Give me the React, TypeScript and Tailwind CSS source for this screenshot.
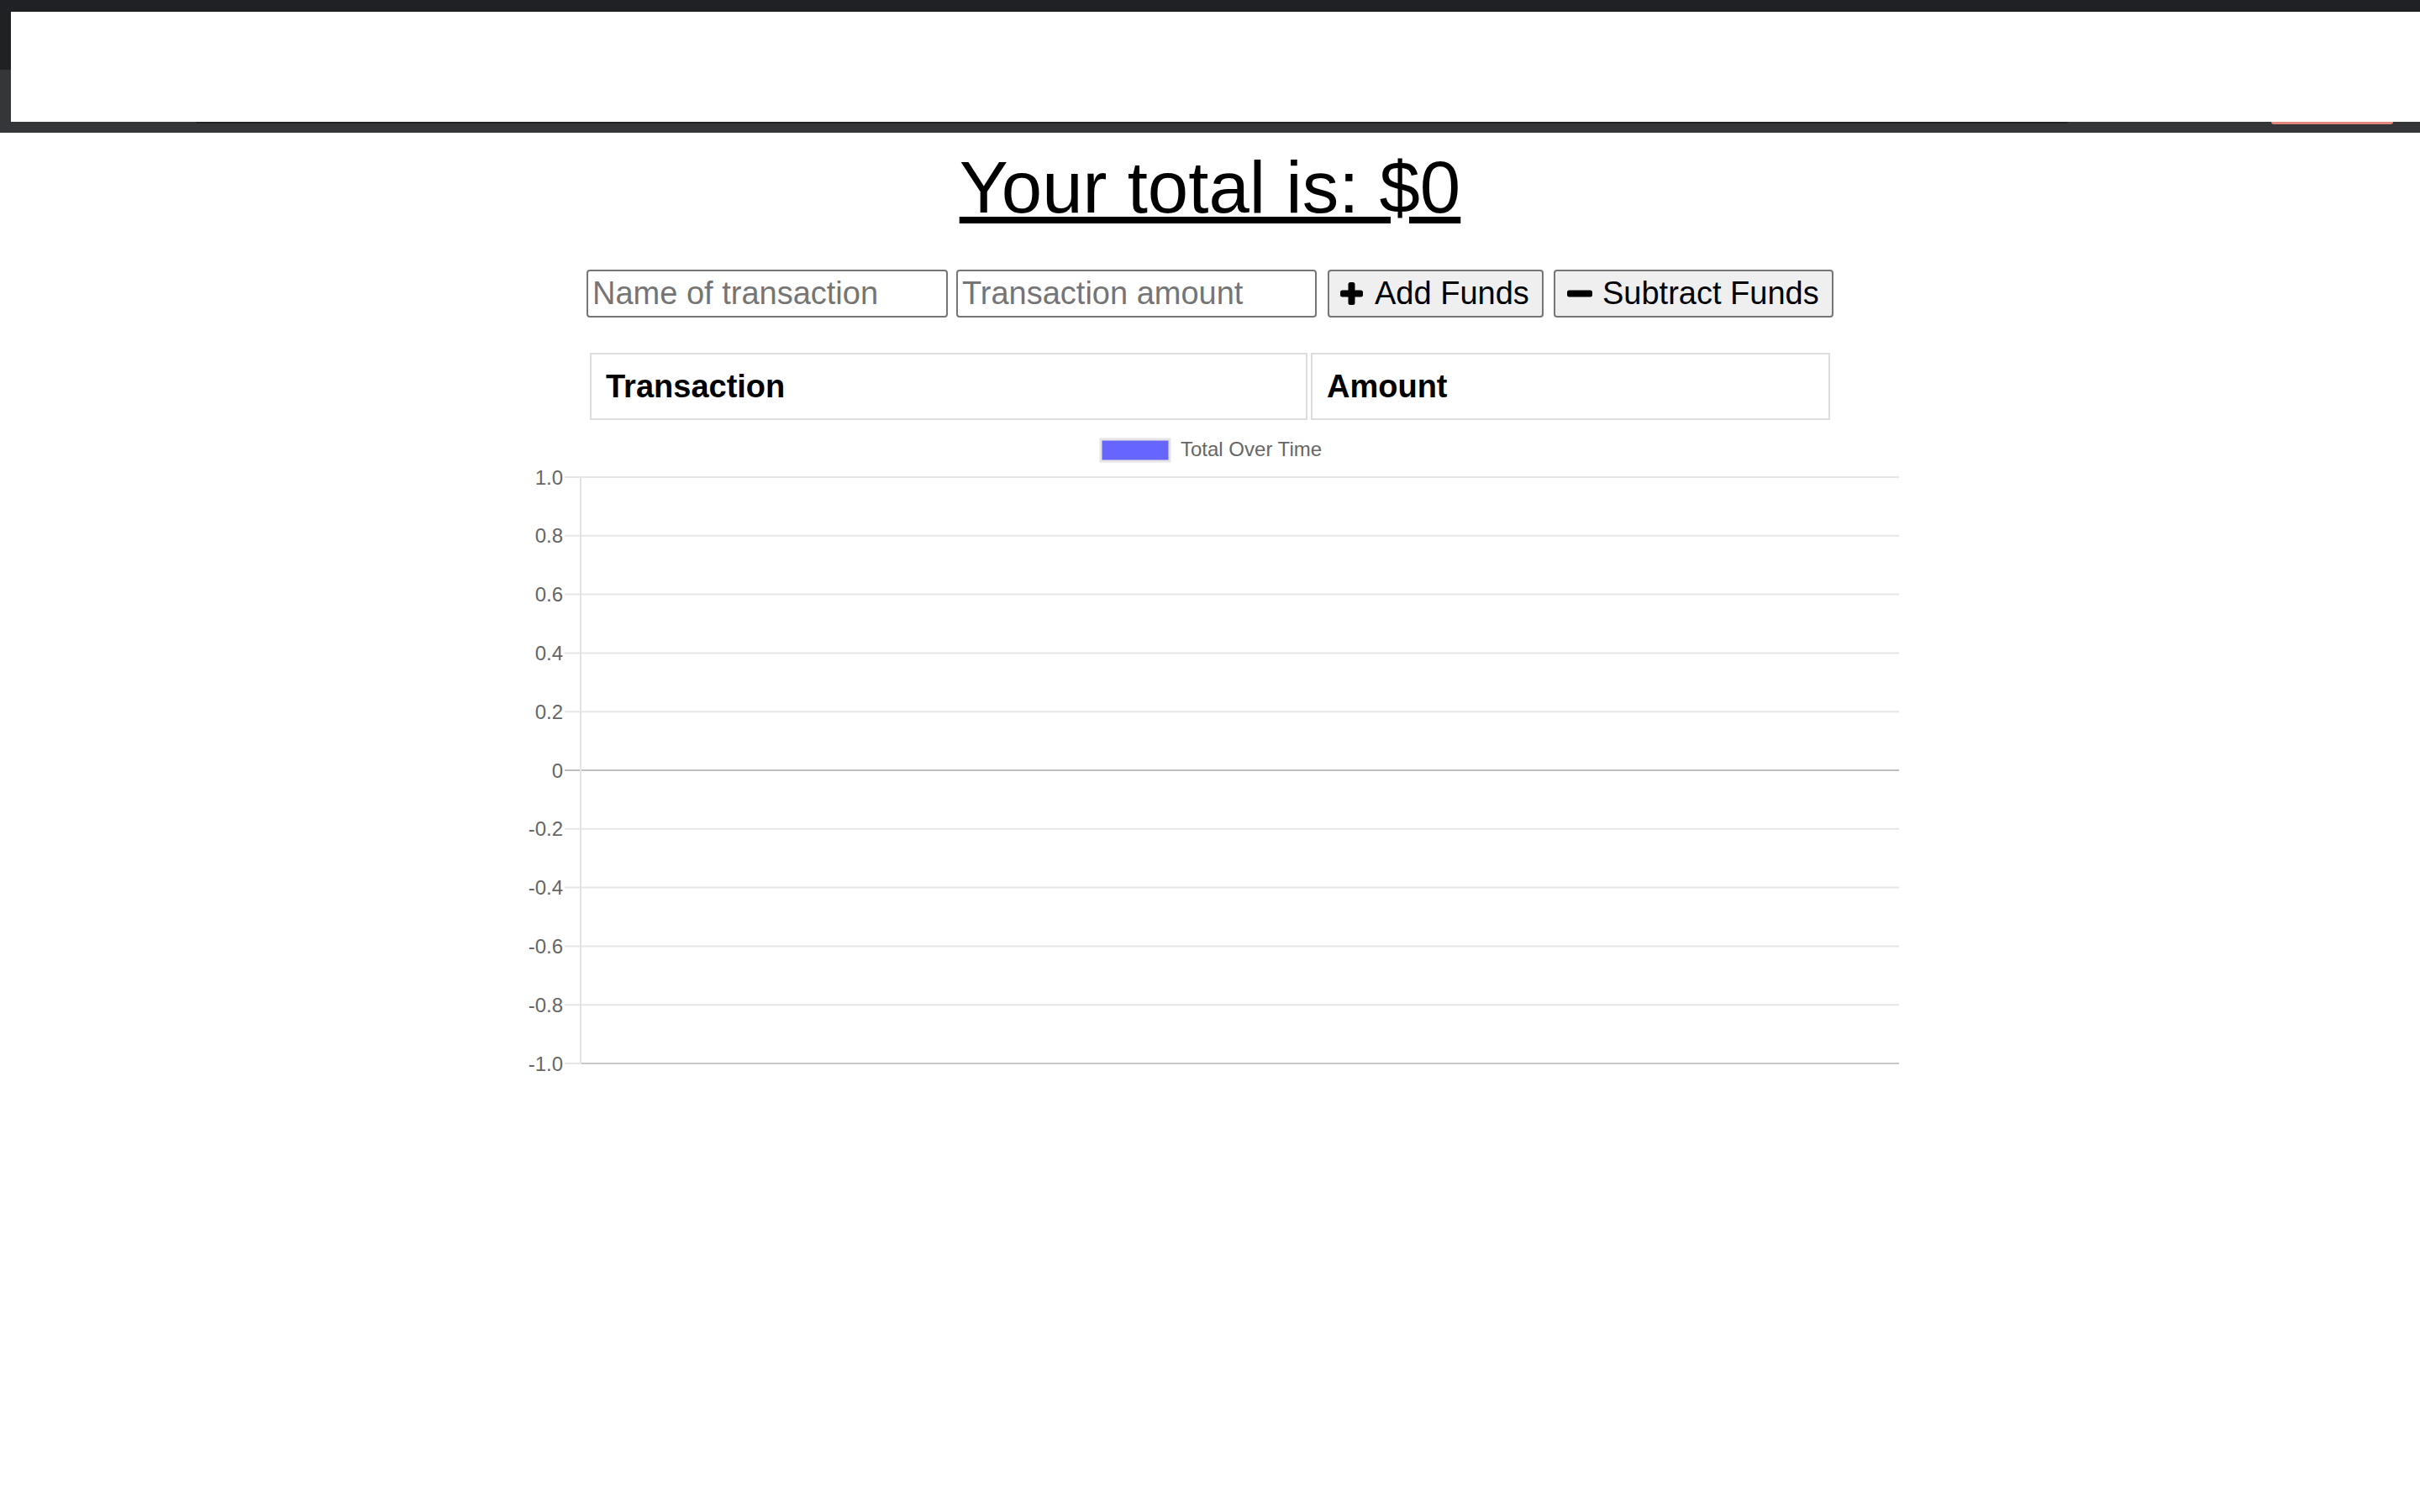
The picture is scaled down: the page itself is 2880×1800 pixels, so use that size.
const font = { fontFamily: '"Liberation Sans", Arial, Helvetica, sans-serif' };

const ticks = ["1.0", "0.8", "0.6", "0.4", "0.2", "0", "-0.2", "-0.4", "-0.6", "-0.8", "-1.0"];

const PlusIcon = () => (
  <svg width="27" height="27" viewBox="0 0 27 27" fill="currentColor">
    <rect x="9.5" y="0" width="8" height="27" rx="2.5" />
    <rect x="0" y="9.5" width="27" height="8" rx="2.5" />
  </svg>
);

const MinusIcon = () => (
  <svg width="30" height="27" viewBox="0 0 30 27" fill="currentColor">
    <rect x="0" y="9.5" width="30" height="8" rx="2.5" />
  </svg>
);

// chart.js style line chart with no data
const Chart = () => {
  const top = 68;
  const step = 69.8;
  return (
    <svg width="1640" height="800" viewBox="0 0 1640 800" style={font}>
      {/* legend */}
      <rect x="690" y="23" width="82" height="26" fill="#6666ff" stroke="#e5e5e5" strokeWidth="3" />
      <text x="785" y="43" fontSize="24" fill="#666">
        Total Over Time
      </text>

      {ticks.map((t, i) => {
        const y = top + i * step;
        const dark = t === "0";
        return (
          <g key={t}>
            <line x1="52" x2="1640" y1={y} y2={y} stroke={dark ? "#bfbfbf" : "#e6e6e6"} strokeWidth="2" />
            <text x="50" y={y + 8.5} fontSize="24" fill="#666" textAnchor="end">
              {t}
            </text>
          </g>
        );
      })}
      {/* x axis border */}
      <line x1="71" x2="1640" y1={top + 10 * step} y2={top + 10 * step} stroke="#c8c8c8" strokeWidth="2" />
      {/* y axis */}
      <line x1="71" x2="71" y1={top - 1} y2={top + 10 * step + 1} stroke="#e3e3e3" strokeWidth="2" />
    </svg>
  );
};

export default function App() {
  return (
    <div className="min-h-[1800px] bg-white" style={font}>
      {/* browser chrome strip */}
      <div className="h-[14px] bg-[#202125]" />
      <div className="flex h-[131px]">
        <div className="flex w-[13px] flex-col">
          <div className="h-[69px] bg-[#202125]" />
          <div className="flex-1 bg-[#35363a]" />
        </div>
        <div className="flex-1 bg-white" />
      </div>
      <div className="flex h-[13px] items-start bg-[#35363a]">
        <div className="ml-[233px] h-[2px] w-[2228px] rounded-b-[2px] bg-[#222326]" />
        <div className="ml-[242px] h-[3px] w-[145px] rounded-b-[6px] bg-[#e2877c]" />
      </div>

      {/* page */}
      <div className="flex flex-col items-center pt-[16px]">
        <h1 className="text-[87px] leading-[98px] font-normal text-black underline">Your total is: $0</h1>

        <div className="mt-[49px] flex items-center">
          <input
            type="text"
            placeholder="Name of transaction"
            className="h-[57px] w-[430px] rounded-[4px] border-2 border-[#767676] px-[5px] text-[38px] text-black outline-none placeholder:text-[#757575]"
          />
          <input
            type="number"
            placeholder="Transaction amount"
            className="ml-[10px] h-[57px] w-[429px] rounded-[4px] border-2 border-[#767676] px-[5px] text-[38px] text-black outline-none placeholder:text-[#757575]"
          />
          <button className="ml-[13px] flex h-[57px] w-[257px] items-center gap-[14px] rounded-[4px] border-2 border-[#767676] bg-[#efefef] pl-[13px] text-[38px] text-black">
            <PlusIcon />
            <span>Add Funds</span>
          </button>
          <button className="ml-[12px] flex h-[57px] w-[333px] items-center gap-[12px] rounded-[4px] border-2 border-[#767676] bg-[#efefef] pl-[14px] text-[38px] text-black">
            <MinusIcon />
            <span>Subtract Funds</span>
          </button>
        </div>

        <div className="mt-[42px] flex gap-[4px]">
          <div className="flex h-[80px] w-[854px] items-center border-2 border-[#dddddd] pl-[17px] text-[38px] font-bold text-black">
            Transaction
          </div>
          <div className="flex h-[80px] w-[618px] items-center border-2 border-[#dddddd] pl-[17px] text-[38px] font-bold text-black">
            Amount
          </div>
        </div>

        <Chart />
      </div>
    </div>
  );
}
